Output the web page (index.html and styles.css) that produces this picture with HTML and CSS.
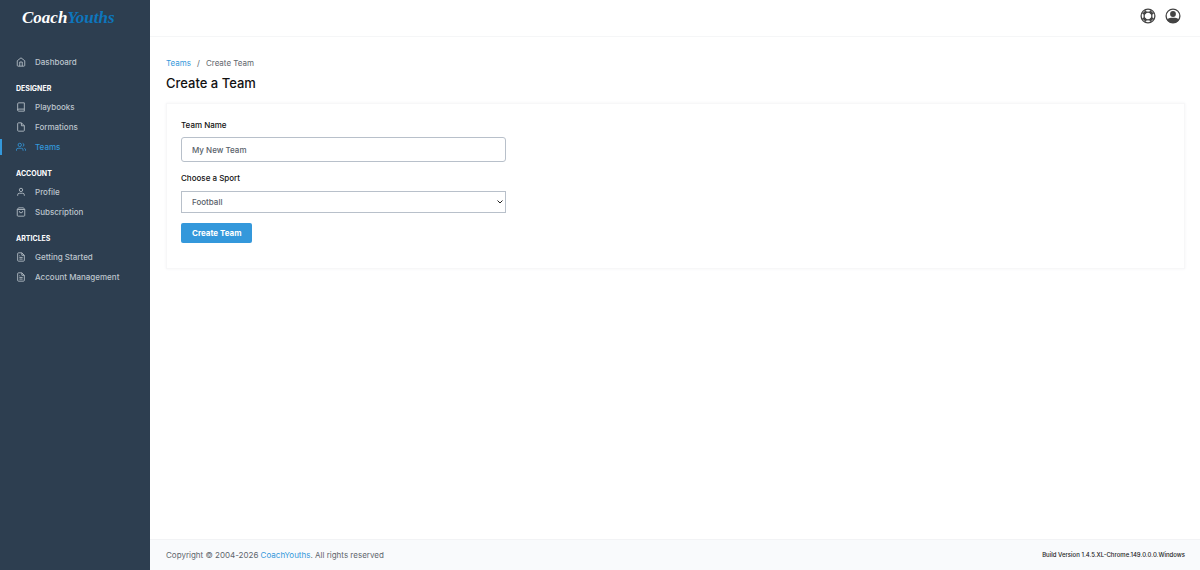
FILE: index.html
```html
<!DOCTYPE html>
<html lang="en">
<head>
  <meta charset="UTF-8">
  <meta name="viewport" content="width=device-width, initial-scale=1.0">
  <title>Create a Team - CoachYouths</title>
  <link rel="stylesheet" href="styles.css">
</head>
<body>
  <aside class="sidebar">
    <a class="logo" href="#">Coach<span>Youths</span></a>
    <nav class="side-nav">
      <a class="nav-link" href="#">
        <svg viewBox="0 0 24 24"><path d="M3 9l9-7 9 7v11a2 2 0 0 1-2 2H5a2 2 0 0 1-2-2z"/><path d="M9 22V12h6v10"/></svg>
        Dashboard
      </a>
      <h2>Designer</h2>
      <a class="nav-link" href="#">
        <svg viewBox="0 0 24 24"><path d="M4 19.500A2.500 2.500 0 0 1 6.500 17H20"/><path d="M6.500 2H20v20H6.500A2.500 2.500 0 0 1 4 19.500v-15A2.500 2.500 0 0 1 6.500 2z"/></svg>
        Playbooks
      </a>
      <a class="nav-link" href="#">
        <svg viewBox="0 0 24 24"><path d="M13 2H6a2 2 0 0 0-2 2v16a2 2 0 0 0 2 2h12a2 2 0 0 0 2-2V9z"/><path d="M13 2v7h7"/></svg>
        Formations
      </a>
      <a class="nav-link active" href="#">
        <svg viewBox="0 0 24 24"><path d="M17 21v-2a4 4 0 0 0-4-4H5a4 4 0 0 0-4 4v2"/><circle cx="9" cy="7" r="4"/><path d="M23 21v-2a4 4 0 0 0-3-3.870"/><path d="M16 3.130a4 4 0 0 1 0 7.750"/></svg>
        Teams
      </a>
      <h2>Account</h2>
      <a class="nav-link" href="#">
        <svg viewBox="0 0 24 24"><path d="M20 21v-2a4 4 0 0 0-4-4H8a4 4 0 0 0-4 4v2"/><circle cx="12" cy="7" r="4"/></svg>
        Profile
      </a>
      <a class="nav-link" href="#">
        <svg viewBox="0 0 24 24"><path d="M6 2L3 6v14a2 2 0 0 0 2 2h14a2 2 0 0 0 2-2V6l-3-4z"/><path d="M3 6h18"/><path d="M16 10a4 4 0 0 1-8 0"/></svg>
        Subscription
      </a>
      <h2>Articles</h2>
      <a class="nav-link" href="#">
        <svg viewBox="0 0 24 24"><path d="M14 2H6a2 2 0 0 0-2 2v16a2 2 0 0 0 2 2h12a2 2 0 0 0 2-2V8z"/><path d="M14 2v6h6M16 13H8M16 17H8M10 9H8"/></svg>
        Getting Started
      </a>
      <a class="nav-link" href="#">
        <svg viewBox="0 0 24 24"><path d="M14 2H6a2 2 0 0 0-2 2v16a2 2 0 0 0 2 2h12a2 2 0 0 0 2-2V8z"/><path d="M14 2v6h6M16 13H8M16 17H8M10 9H8"/></svg>
        Account Management
      </a>
    </nav>
  </aside>

  <div class="page">
    <header class="topbar">
      <button class="icon-btn" aria-label="Help">
        <svg viewBox="0 0 16 16"><circle cx="8" cy="8" r="6.900"/><circle cx="8" cy="8" r="3.900"/><path class="solid" d="M2 5.800L5.800 2L7 4.500L4.500 7zM10.200 2L14 5.800L11.500 7L9 4.500zM14 10.200L10.200 14L9 11.500L11.500 9zM5.800 14L2 10.200L4.500 9L7 11.500z"/></svg>
      </button>
      <button class="icon-btn" aria-label="User menu">
        <svg viewBox="0 0 16 16"><circle cx="8" cy="8" r="6.900"/><circle class="solid" cx="8" cy="6" r="2.900"/><path class="solid" d="M2 12C3 10.400 4.500 9.900 6 9.700h4c1.500.2 3 .7 4 2.300A7 7 0 0 1 8 15a7 7 0 0 1-6-3z"/></svg>
      </button>
    </header>

    <main class="content">
      <nav class="breadcrumb" aria-label="Breadcrumb">
        <a href="#">Teams</a>
        <span>/</span>
        <span>Create Team</span>
      </nav>
      <h1>Create a Team</h1>

      <form class="card">
        <label for="team-name">Team Name</label>
        <input type="text" id="team-name" value="My New Team">
        <label for="sport">Choose a Sport</label>
        <div class="select-wrap">
          <select id="sport">
            <option>Football</option>
          </select>
          <svg viewBox="0 0 6 4"><path d="M.5.5L3 3L5.500.5"/></svg>
        </div>
        <button class="btn" type="button">Create Team</button>
      </form>
    </main>

    <footer class="footer">
      <p>Copyright © 2004-2026 <a href="#">CoachYouths</a>. All rights reserved</p>
      <p class="build">Build Version 1.4.5.XL-Chrome.149.0.0.0.Windows</p>
    </footer>
  </div>
</body>
</html>
```
FILE: styles.css
```css
* {
  box-sizing: border-box;
}

body {
  display: flex;
  min-height: 100vh;
  margin: 0;
  background: #fff;
  color: #5f666d;
  font-family: Inter, "Open Sans", sans-serif;
  font-size: 8px;
  line-height: 12px;
}

a {
  color: #3498db;
  text-decoration: none;
}

svg {
  fill: none;
  stroke: currentColor;
}

/* Sidebar */
.sidebar {
  flex: 0 0 150px;
  background: #2d3e50;
}

.logo {
  display: block;
  height: 36px;
  padding-left: 22px;
  color: #fff;
  font-family: "Liberation Serif", serif;
  font-size: 17px;
  font-style: italic;
  font-weight: 700;
  line-height: 36px;
}

.logo span {
  color: #0d76bd;
}

.side-nav {
  padding-top: 16px;
}

.side-nav h2 {
  margin: 8px 0 0;
  padding-left: 16px;
  color: #fff;
  font-size: 7px;
  font-weight: 700;
  line-height: 17px;
  text-transform: uppercase;
}

.nav-link {
  display: flex;
  align-items: center;
  gap: 9px;
  height: 20px;
  padding-left: 16px;
  color: #bdc5cd;
  font-weight: 500;
}

.nav-link svg {
  width: 10px;
  height: 10px;
  stroke-width: 2;
}

.nav-link.active {
  color: #3498db;
  background: linear-gradient(#3498db, #3498db) left center / 2px 16px no-repeat;
}

/* Main area */
.page {
  display: flex;
  flex: 1;
  flex-direction: column;
  min-width: 0;
}

.topbar {
  display: flex;
  justify-content: flex-end;
  align-items: center;
  gap: 9px;
  height: 37px;
  padding: 0 19px 4px;
  border-bottom: 1px solid #f5f6f7;
}

.icon-btn {
  display: flex;
  padding: 0;
  border: 0;
  background: none;
  color: #444;
  cursor: pointer;
}

.icon-btn svg {
  width: 16px;
  height: 16px;
  stroke-width: 1.3;
}

.icon-btn .solid {
  fill: currentColor;
  stroke: none;
}

.content {
  flex: 1;
  padding: 20px 15px 0 16px;
}

.breadcrumb {
  display: flex;
  gap: 6px;
}

h1 {
  margin: 5px 0 11px;
  color: #111;
  font-size: 13px;
  font-weight: 500;
  line-height: 18px;
}

.card {
  padding: 15px 14px 25px;
  border: 1px solid #f7f7f8;
  box-shadow: 0 0 3px #f3f3f5;
}

.card label {
  display: block;
  color: #111;
  font-weight: 500;
}

.card input,
.card select {
  display: block;
  width: 100%;
  max-width: 325px;
  padding: 0 10px;
  border: 1px solid #b8c0ca;
  background: #fff;
  color: #59616a;
  font: inherit;
  font-weight: 500;
}

.card input {
  height: 25px;
  margin: 6px 0 10px;
  border-radius: 3px;
}

.select-wrap {
  position: relative;
  max-width: 325px;
  margin: 7px 0 10px;
}

.card select {
  height: 22px;
  border-radius: 0;
  appearance: none;
}

.select-wrap svg {
  position: absolute;
  top: 9px;
  right: 3px;
  width: 6px;
  height: 4px;
  color: #222;
  pointer-events: none;
}

.btn {
  height: 20px;
  padding: 0 11px;
  border: 0;
  border-radius: 2px;
  background: #3498db;
  color: #fff;
  font: inherit;
  font-weight: 700;
  cursor: pointer;
}

/* Footer */
.footer {
  display: flex;
  justify-content: space-between;
  align-items: center;
  height: 31px;
  padding: 0 15px 0 16px;
  border-top: 1px solid #f2f3f5;
  background: #f9fafc;
}

.footer p {
  margin: 0;
}

.footer .build {
  color: #222;
  font-size: 6px;
  font-weight: 500;
}
```
